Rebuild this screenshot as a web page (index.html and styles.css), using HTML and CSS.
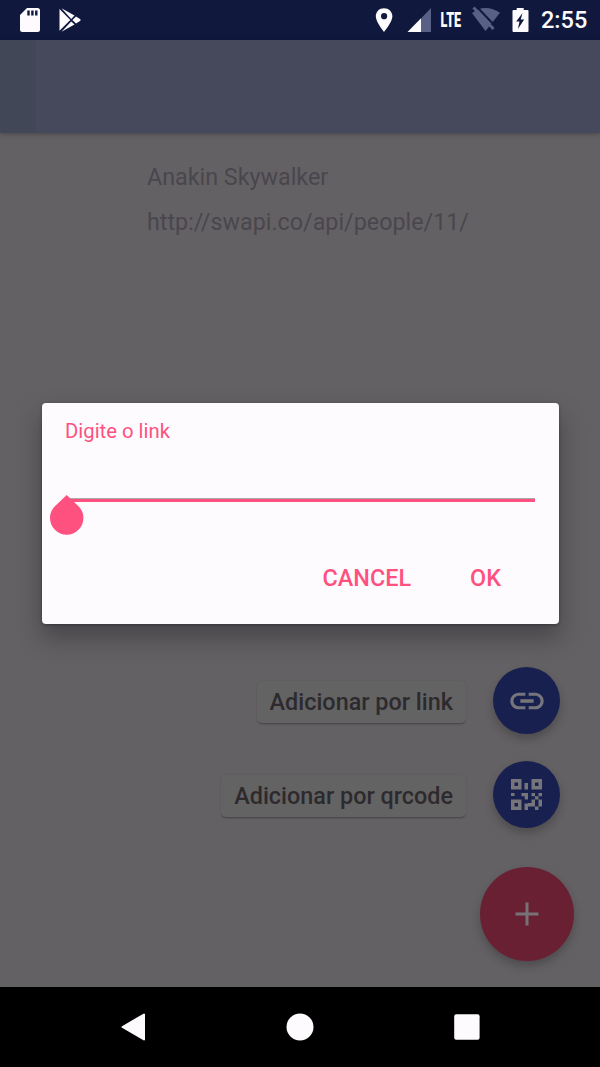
FILE: index.html
```html
<!DOCTYPE html>
<html lang="pt-BR">
<head>
<meta charset="utf-8">
<title>Adicionar por link</title>
<link rel="stylesheet" href="styles.css">
</head>
<body>
<div class="screen">
  <header class="status">
    <svg class="status-icons" width="100" height="40" viewBox="0 0 100 40">
      <path fill="#fdfbfd" d="M27 8h10.500q2.500 0 2.500 2.500v19q0 2.500-2.500 2.500h-15q-2.500 0-2.500-2.500V15z"/>
      <path fill="#11183e" d="M27.300 10.500h2.400v5h-2.400zM31.200 10.500h2.400v5h-2.400zM35.100 10.500h2.400v5h-2.400z"/>
      <path fill="#fdfbfd" d="M59.500 9v21.800L70.300 20zM61.500 8.300l13 7.300-3.300 3.300zM76 16.500l4 2.500q1.500 1 0 2l-4 2.500-3.600-3.500zM61.500 31.700l9.700-10.300 3.300 3z"/>
    </svg>
    <div class="status-right">
      <svg width="75" height="40" viewBox="365 0 75 40">
        <path fill="#fdfbfd" fill-rule="evenodd" d="M384 8.200c-4.700 0-8.200 3.500-8.200 8.100 0 5.800 8.200 15.700 8.200 15.700s8.400-9.900 8.400-15.700c0-4.600-3.700-8.100-8.400-8.100zm.1 4.900a3.100 3.100 0 1 1 0 6.200 3.100 3.100 0 0 1 0-6.200z"/>
        <path fill="#596085" d="M421 18.500L431 8v24h-10z"/><path fill="#fdfbfd" d="M407.500 32L421 18.300V32z"/>
      </svg>
      <span class="lte">LTE</span>
      <svg width="70" height="40" viewBox="465 0 70 40">
        <path fill="#596085" d="M478 9.500q11-4 22 3.300L485.500 31 472 13z"/>
        <path stroke="#11183e" stroke-width="2" d="M476.500 6.500l21 22"/>
        <path stroke="#596085" stroke-width="3" d="M473.500 7.500l20 21.500"/>
        <path fill="#fdfbfd" d="M512.700 10h4V8h7v2h3.800q1 0 1 1v20q0 1-1 1h-14q-1 0-1-1V11q0-1 1-1z"/>
        <path fill="#11183e" d="M522.500 13l-6.300 8.500h3.300l-1.600 7.500 6.300-9.500h-3.500z"/>
      </svg>
      <time class="clock">2:55</time>
    </div>
  </header>
  <div class="appbar"></div>
  <main class="content">
    <div class="person">
      <p class="name">Anakin Skywalker</p>
      <p class="url">http://swapi.co/api/people/11/</p>
    </div>
    <div class="actions">
      <div class="action"><span class="chip">Adicionar por link</span>
        <button class="fab" aria-label="Link"><svg width="40" height="40" viewBox="0 0 24 24"><path fill="#77757c" d="M3.900 12c0-1.710 1.390-3.100 3.100-3.100h4V7H7c-2.760 0-5 2.240-5 5s2.240 5 5 5h4v-1.900H7c-1.710 0-3.100-1.390-3.100-3.100zM8 13h8v-2H8v2zm9-6h-4v1.900h4c1.710 0 3.100 1.390 3.100 3.100s-1.390 3.100-3.100 3.100h-4V17h4c2.760 0 5-2.240 5-5s-2.240-5-5-5z"/></svg></button>
      </div>
      <div class="action"><span class="chip">Adicionar por qrcode</span>
        <button class="fab" aria-label="QR code"><svg width="31" height="31" viewBox="0 0 31 31" fill="#77757c"><path fill-rule="evenodd" d="M0 0h10.500v10.500H0zM3.500 3.500v3.500h3.500v-3.500zM20.500 0H31v10.500H20.500zM24 3.500v3.500h3.500v-3.500zM0 20.500h10.500V31H0zM3.500 24v3.500h3.500v-3.500z"/><path d="M13.500 4h3.500v6.500h-3.500zM0 14h3.500v3H0zM10.500 14H17v6.500h-3.300v-3.300h-3.200zM20.500 14H24v3.300h-3.500zM27.500 14H31v3.300h-3.500zM24 17.300h3.500v3.200H24zM20.500 20.500H24V24h-3.500v3.500H17V31h-3.500v-6.500H17V24h3.500zM27.500 20.500H31v7h-3.500V31h-3.500v-3.500h-3.500V24H24v3.500h3.500z"/></svg></button>
      </div>
      <button class="fab main-fab" aria-label="Adicionar"><svg width="24" height="24"><path stroke="#777277" stroke-width="3" d="M.5 12h23M12 .5v23"/></svg></button>
    </div>
  </main>
  <nav class="nav">
    <svg width="28" height="30" viewBox="0 0 28 30"><path fill="#fdfbfd" stroke="#fdfbfd" stroke-width="2" stroke-linejoin="round" d="M3.500 15L25 2.500v25z"/></svg>
    <svg width="28" height="30"><circle cx="14" cy="15" r="13.500" fill="#fdfbfd"/></svg>
    <svg width="28" height="30"><rect x="1.200" y="2.300" width="25.400" height="25.400" rx="2" fill="#fdfbfd"/></svg>
  </nav>
  <section class="dialog" role="dialog">
    <label class="label">Digite o link</label>
    <div class="field"><svg class="handle" width="34" height="40" viewBox="0 0 34 40"><path fill="#ff5180" d="M16.700 0L28.500 11.200A16.700 16.700 0 1 1 4.900 11.200z"/></svg></div>
    <div class="buttons"><button class="text-button">CANCEL</button><button class="text-button">OK</button></div>
  </section>
</div>
</body>
</html>
```
FILE: styles.css
```css
* { box-sizing: border-box; }
body { margin: 0; font-family: Roboto, sans-serif; }
p { margin: 0; }
button { border: 0; background: none; padding: 0; font: inherit; color: inherit; }
svg { display: block; flex: none; }
.screen { position: relative; display: flex; flex-direction: column; width: 600px; height: 1067px; background: #646164; overflow: hidden; }
.status { display: flex; justify-content: space-between; height: 40px; background: #11183e; color: #fdfbfd; }
.status-right { display: flex; align-items: center; width: 235px; }
.lte { width: 25px; padding-left: 1px; font-size: 21px; font-weight: 900; line-height: 40px; white-space: nowrap; transform: scaleX(.6); transform-origin: left; }
.clock { margin-left: 6px; font-size: 23.500px; font-weight: 500; line-height: 42px; }
.appbar { height: 93px; flex: none; background: linear-gradient(to right, #424758 36px, #46495c 36px); box-shadow: 0 1px 5px rgba(0, 0, 0, .3); }
.content { display: flex; flex-direction: column; justify-content: space-between; flex: 1; }
.person { padding: 28px 0 0 147px; color: #4a464d; font-size: 23.300px; line-height: 32px; }
.url { margin-top: 13px; }
.actions { display: flex; flex-direction: column; align-items: flex-end; padding: 0 26.500px 26px 0; }
.action { display: flex; align-items: center; gap: 27px; margin: 0 13.500px 26.500px 0; }
.chip { margin-top: 3px; padding: 0 13px; border-radius: 5px; background: #646364; box-shadow: 0 2px 2px -1px #464347, 0 0 2px rgba(60, 55, 60, .12); color: #2d2a2e; font-size: 23.400px; font-weight: 500; line-height: 42px; }
.fab { display: flex; align-items: center; justify-content: center; width: 67px; height: 67px; border-radius: 50%; background: #18204f; box-shadow: 0 5px 9px rgba(25, 25, 30, .3); }
.main-fab { width: 94px; height: 94px; margin-top: 13px; background: #692032; }
.nav { display: flex; align-items: center; justify-content: center; gap: 139px; height: 80px; background: #000; }
.dialog { position: absolute; top: 403px; left: 41.500px; width: 517px; height: 220.500px; padding: 14px 23.500px; border-radius: 4px; background: #fdfbfe; box-shadow: 0 13px 24px rgba(20, 20, 25, .38), 0 1px 3px rgba(20, 20, 25, .4); color: #ff5180; }
.label { display: block; font-size: 20.300px; line-height: 28px; }
.field { position: relative; height: 57px; border-bottom: 3px solid #ff5180; box-shadow: inset 0 -1px #aaa; }
.handle { position: absolute; top: 50px; left: -15px; }
.buttons { display: flex; justify-content: flex-end; gap: 59px; padding: 60px 34px 0 0; font-size: 23.400px; font-weight: 500; line-height: 32px; }
```
